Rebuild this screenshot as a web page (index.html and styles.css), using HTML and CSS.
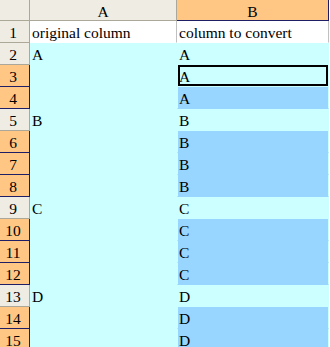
FILE: index.html
```html
<!DOCTYPE html>
<html lang="en">
<head>
    <meta charset="UTF-8">
    <meta name="viewport" content="width=device-width, initial-scale=1.0">
    <title>Sheet</title>
    <link rel="stylesheet" href="styles.css">
</head>
<body>
    <div class="sheet">
        <div class="corner"></div>
        <div class="col-head">A</div>
        <div class="col-head sel">B</div>

        <div class="row-head">1</div>
        <div class="cell white">original column</div>
        <div class="cell b white">column to convert</div>

        <div class="row-head">2</div>
        <div class="cell">A</div>
        <div class="cell b">A</div>

        <div class="row-head sel">3</div>
        <div class="cell"></div>
        <div class="cell b active">A</div>

        <div class="row-head sel">4</div>
        <div class="cell"></div>
        <div class="cell b blue">A</div>

        <div class="row-head">5</div>
        <div class="cell">B</div>
        <div class="cell b">B</div>

        <div class="row-head sel">6</div>
        <div class="cell"></div>
        <div class="cell b blue">B</div>

        <div class="row-head sel">7</div>
        <div class="cell"></div>
        <div class="cell b blue">B</div>

        <div class="row-head sel">8</div>
        <div class="cell"></div>
        <div class="cell b blue">B</div>

        <div class="row-head">9</div>
        <div class="cell">C</div>
        <div class="cell b">C</div>

        <div class="row-head sel">10</div>
        <div class="cell"></div>
        <div class="cell b blue">C</div>

        <div class="row-head sel">11</div>
        <div class="cell"></div>
        <div class="cell b blue">C</div>

        <div class="row-head sel">12</div>
        <div class="cell"></div>
        <div class="cell b blue">C</div>

        <div class="row-head">13</div>
        <div class="cell">D</div>
        <div class="cell b">D</div>

        <div class="row-head sel">14</div>
        <div class="cell"></div>
        <div class="cell b blue">D</div>

        <div class="row-head sel">15</div>
        <div class="cell"></div>
        <div class="cell b blue">D</div>
    </div>
</body>
</html>
```

FILE: styles.css
```css
body {
    margin: 0;
    background: #fff;
    font-family: "Liberation Serif", "Times New Roman", serif;
    font-size: 15.5px;
    color: #000;
}
.sheet {
    display: grid;
    grid-template-columns: 30px 147px 152px;
    grid-template-rows: 21px repeat(15, 22px);
    width: 329px;
}
.sheet > div {
    box-sizing: border-box;
    line-height: 21px;
    padding-top: 1px;
    white-space: nowrap;
    overflow: hidden;
    border-right: 1px solid transparent;
    border-bottom: 1px solid transparent;
    background-clip: padding-box;
}
.corner,
.col-head,
.row-head {
    background-color: #efece3;
    border-right-color: #aca899 !important;
    border-bottom-color: #aca899 !important;
}
.col-head {
    text-align: center;
}
.row-head {
    text-align: center;
    padding-right: 3px;
}
.col-head.sel,
.row-head.sel {
    background-color: #ffc684;
    border-right-color: #1e1e66 !important;
    border-bottom-color: #1e1e66 !important;
}
.cell {
    background-color: #ccffff;
    border-right-color: #ccffff !important;
    border-bottom-color: #ccffff !important;
    padding-left: 2px;
}
.cell.b {
    border-left: 1px solid #ccffff;
    padding-left: 1px;
}
.cell.white {
    background-color: #fff;
    border-right-color: #c0c0c0 !important;
    border-bottom-color: #fff !important;
}
.cell.b.white {
    border-left-color: #fff;
}
.cell.blue {
    background-color: #99d6ff;
    border-bottom-color: #99d6ff !important;
}
.cell.active {
    box-shadow: inset 0 0 0 2px #000;
}
```
